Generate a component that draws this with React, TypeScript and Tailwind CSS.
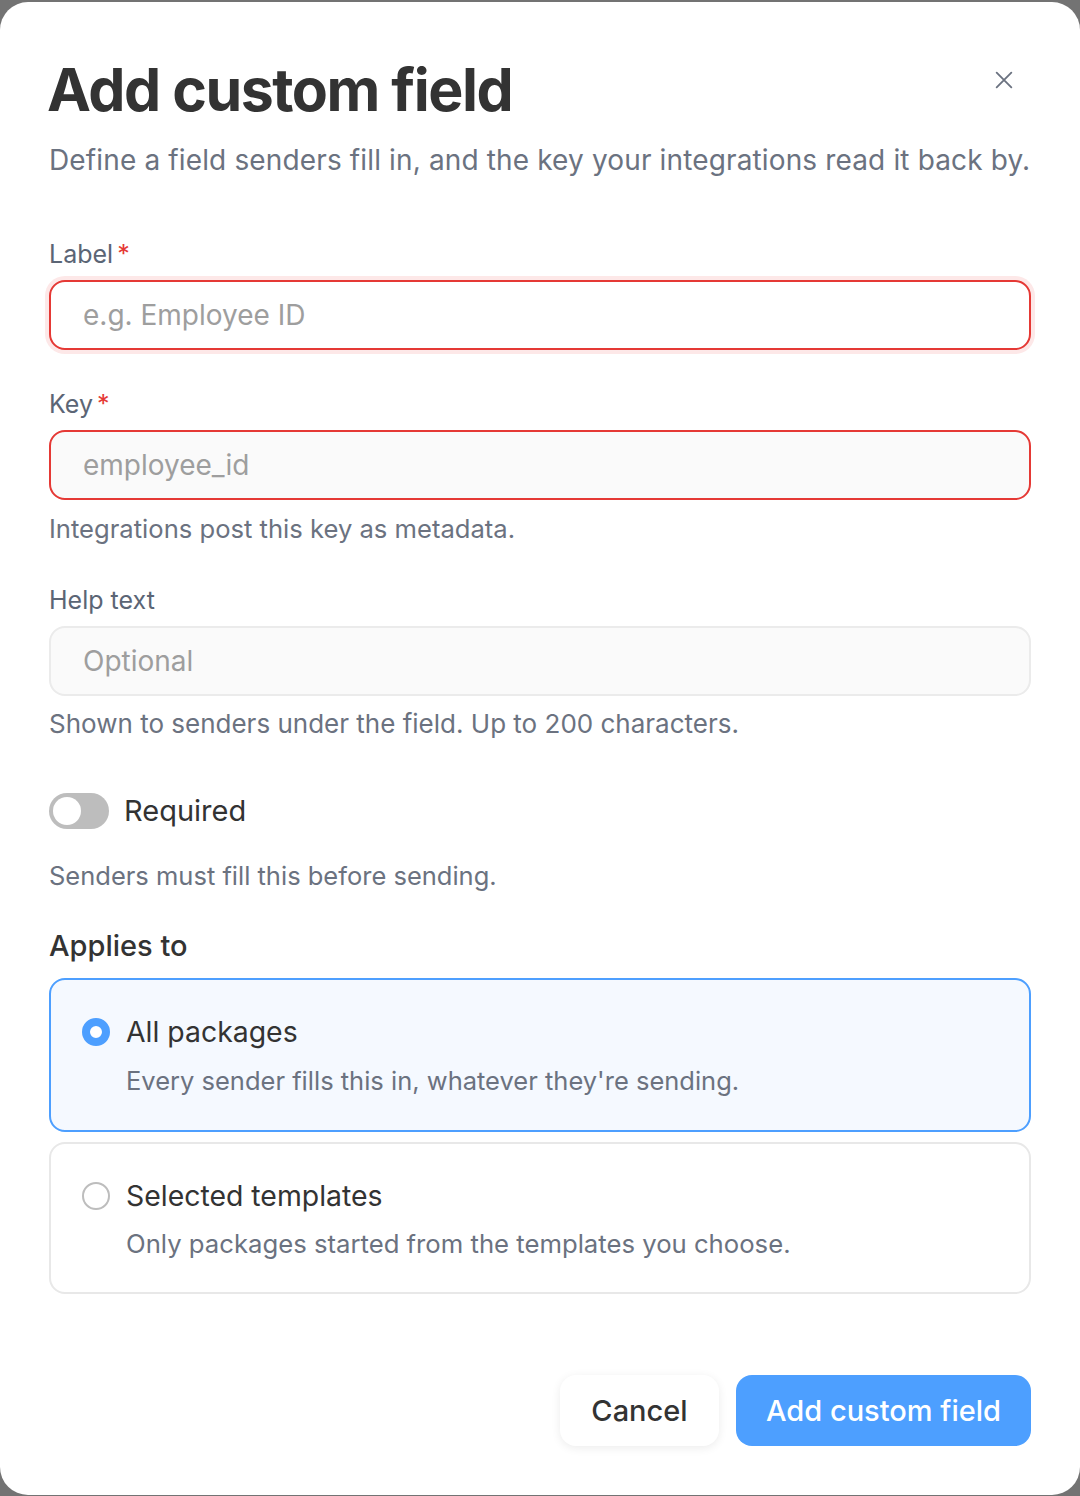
import React, { useState } from 'react';

const font = { fontFamily: 'Inter, "Noto Sans", sans-serif' };

const FieldLabel: React.FC<{ text: string; required?: boolean }> = ({ text, required }) => (
  <div className="text-[25px] leading-[32px] text-[#5b6575]">
    {text}
    {required && <span className="ml-[4px] text-[#e53935]">*</span>}
  </div>
);

const App: React.FC = () => {
  const [required, setRequired] = useState(false);
  const [scope, setScope] = useState<'all' | 'selected'>('all');

  return (
    <div className="min-h-screen bg-[#737373] py-[2px]" style={font}>
      <div className="flex flex-col rounded-[28px] bg-white px-[49px] pt-[52px] pb-[49px]">
        {/* header */}
        <div className="flex items-start justify-between">
          <h1 className="-ml-[2px] text-[59px] font-bold leading-[72px] tracking-[-0.025em] text-[#333333]">
            Add custom field
          </h1>
          <button className="mt-[6px] mr-[7px] flex h-[40px] w-[40px] items-center justify-center text-[#6b7280]">
            <svg width="22" height="22" viewBox="0 0 24 24" fill="none" stroke="currentColor" strokeWidth="2" strokeLinecap="round">
              <path d="M4 4l16 16M20 4L4 20" />
            </svg>
          </button>
        </div>
        <p className="mt-[16px] text-[28px] leading-[36px] tracking-[0.005em] text-[#6b7280]">
          Define a field senders fill in, and the key your integrations read it back by.
        </p>

        {/* label */}
        <div className="mt-[60px]">
          <FieldLabel text="Label" required />
        </div>
        <input
          placeholder="e.g. Employee ID"
          className="mt-[10px] h-[70px] w-full rounded-[16px] border-2 border-[#e53935] bg-white px-[32px] text-[28px] text-[#333] ring-4 ring-[#fde8e8] outline-none placeholder:text-[#9e9e9e]"
        />

        {/* key */}
        <div className="mt-[38px]">
          <FieldLabel text="Key" required />
        </div>
        <input
          placeholder="employee_id"
          className="mt-[10px] h-[70px] w-full rounded-[16px] border-2 border-[#e53935] bg-[#fafafa] px-[32px] text-[28px] text-[#333] outline-none placeholder:text-[#9e9e9e]"
        />
        <p className="mt-[13px] text-[25.6px] leading-[32px] text-[#6b7280]">
          Integrations post this key as metadata.
        </p>

        {/* help text */}
        <div className="mt-[39px]">
          <FieldLabel text="Help text" />
        </div>
        <input
          placeholder="Optional"
          className="mt-[10px] h-[70px] w-full rounded-[16px] border-2 border-[#ebebeb] bg-[#fafafa] px-[32px] text-[28px] text-[#333] outline-none placeholder:text-[#9e9e9e]"
        />
        <p className="mt-[12px] text-[26px] leading-[32px] text-[#6b7280]">
          Shown to senders under the field. Up to 200 characters.
        </p>

        {/* required toggle */}
        <div className="mt-[53px] flex items-center gap-[15px]">
          <button
            onClick={() => setRequired(!required)}
            className={`flex h-[36px] w-[60px] items-center rounded-full px-[4px] ${required ? 'justify-end bg-[#4d9fff]' : 'justify-start bg-[#bdbdbd]'}`}
          >
            <span className="h-[28px] w-[28px] rounded-full bg-white" />
          </button>
          <span className="text-[29px] leading-[36px] text-[#333333]">Required</span>
        </div>
        <p className="mt-[31px] text-[25.5px] leading-[32px] text-[#6b7280]">
          Senders must fill this before sending.
        </p>

        {/* applies to */}
        <div className="mt-[36px] text-[29px] font-medium leading-[36px] text-[#333333]">Applies to</div>
        <div className="mt-[14px] flex flex-col gap-[10px]">
          <button
            onClick={() => setScope('all')}
            className={`flex flex-col rounded-[16px] border-2 pt-[34px] pr-[31px] pb-[33px] pl-[31px] text-left ${scope === 'all' ? 'border-[#4d9fff] bg-[#f5f9ff]' : 'border-[#e8e8e8] bg-white'}`}
          >
            <div className="flex items-center gap-[16px]">
              <span className={`h-[28px] w-[28px] shrink-0 rounded-full ${scope === 'all' ? 'border-[8px] border-[#4d9fff] bg-white' : 'border-2 border-[#bdbdbd] bg-white'}`} />
              <span className="text-[28.4px] leading-[36px] text-[#333333]">All packages</span>
            </div>
            <span className="mt-[15px] pl-[44px] text-[25.5px] leading-[32px] text-[#6b7280]">
              Every sender fills this in, whatever they're sending.
            </span>
          </button>
          <button
            onClick={() => setScope('selected')}
            className={`flex flex-col rounded-[16px] border-2 pt-[34px] pr-[31px] pb-[32px] pl-[31px] text-left ${scope === 'selected' ? 'border-[#4d9fff] bg-[#f5f9ff]' : 'border-[#e8e8e8] bg-white'}`}
          >
            <div className="flex items-center gap-[16px]">
              <span className={`h-[28px] w-[28px] shrink-0 rounded-full ${scope === 'selected' ? 'border-[8px] border-[#4d9fff] bg-white' : 'border-2 border-[#bdbdbd] bg-white'}`} />
              <span className="text-[28.4px] leading-[36px] text-[#333333]">Selected templates</span>
            </div>
            <span className="mt-[14px] pl-[44px] text-[25.7px] leading-[32px] text-[#6b7280]">
              Only packages started from the templates you choose.
            </span>
          </button>
        </div>

        {/* footer */}
        <div className="mt-[81px] flex justify-end gap-[17px]">
          <button className="h-[71px] w-[159px] rounded-[16px] bg-white text-[29px] font-medium text-[#333333] shadow-[0_2px_10px_rgba(0,0,0,0.08)]">
            Cancel
          </button>
          <button className="h-[71px] w-[295px] rounded-[16px] bg-[#4d9fff] text-[29px] font-medium text-white">
            Add custom field
          </button>
        </div>
      </div>
    </div>
  );
};

export default App;
